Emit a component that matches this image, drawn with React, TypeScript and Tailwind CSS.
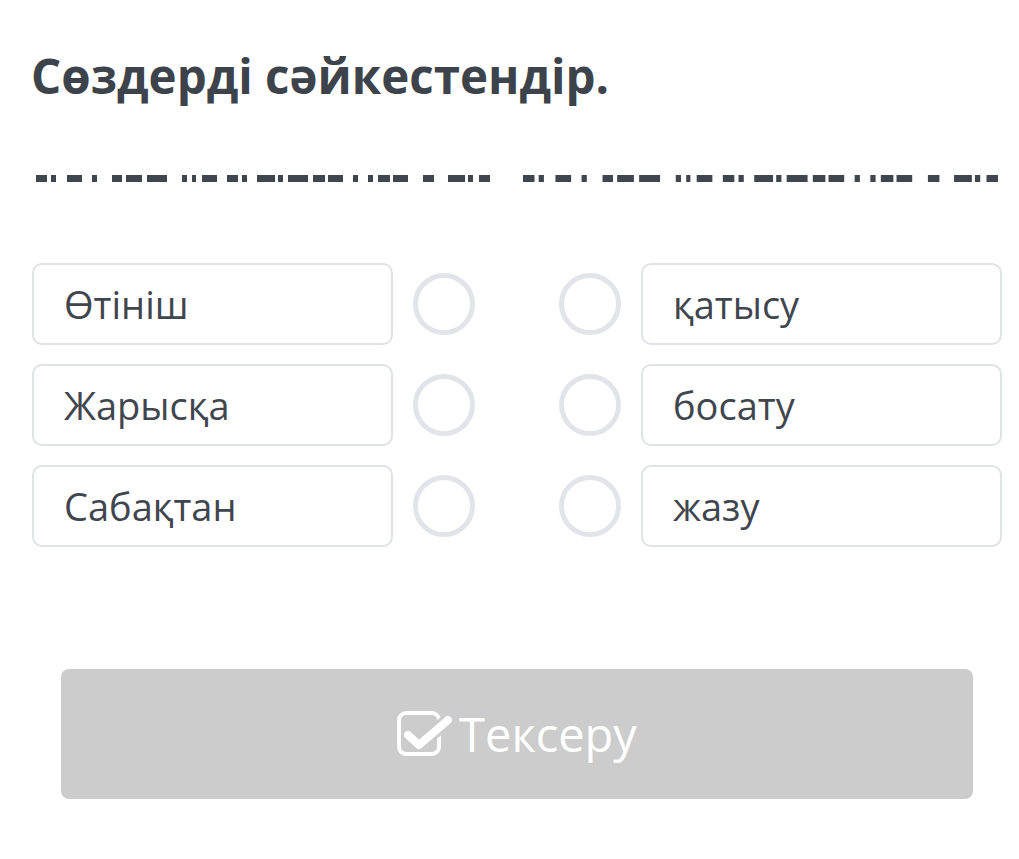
import { Fragment } from "react";

const segs: [number, number][] = [
  [0, 11], [15, 5], [31, 15], [56, 5], [76, 10], [90, 16], [111, 20], [146, 5], [156, 4], [166, 15],
  [191, 11], [206, 5], [221, 18], [242, 5], [252, 20], [277, 12], [292, 15], [317, 5], [332, 5],
  [342, 12], [357, 15], [387, 11], [412, 17], [432, 5], [443, 11],
];

const Dashes = ({ width }: { width: number }) => (
  <svg width={width} height="7" viewBox="0 0 454 7" preserveAspectRatio="none" className="block">
    {segs.map(([x, w], i) => (
      <rect key={i} x={x} y="0" width={w} height="7" fill="#40464e" />
    ))}
  </svg>
);

const Circle = () => (
  <div className="w-[62px] h-[62px] rounded-full border-[5px] border-[#e1e5e9] shrink-0" />
);

const Box = ({ text }: { text: string }) => (
  <div className="w-[361px] h-[82px] rounded-[10px] border-2 border-[#dfe3e6] flex items-center pl-[30px] text-[38px] text-[#40464e] shrink-0">
    {text}
  </div>
);

const rows = [
  ["Өтініш", "қатысу"],
  ["Жарысқа", "босату"],
  ["Сабақтан", "жазу"],
];

export default function App() {
  return (
    <div className="min-h-screen bg-white pl-[32px] pr-[17px] pt-[43px]" style={{ fontFamily: '"Open Sans", "Noto Sans", sans-serif' }}>
      <h1 className="text-[47.5px] font-bold text-[#3d434b] leading-[66px] -ml-[1px]">Сөздерді сәйкестендір.</h1>

      <div className="flex items-center mt-[66px] pl-[4px]">
        <Dashes width={454} />
        <div className="w-[33px]" />
        <Dashes width={475} />
      </div>

      <div className="flex flex-col gap-[19px] mt-[81px]">
        {rows.map(([l, r]) => (
          <Fragment key={l}>
            <div className="flex items-center">
              <Box text={l} />
              <div className="ml-[20px]"><Circle /></div>
              <div className="ml-[84px]"><Circle /></div>
              <div className="ml-[20px]"><Box text={r} /></div>
            </div>
          </Fragment>
        ))}
      </div>

      <button className="mt-[122px] ml-[29px] w-[912px] h-[130px] rounded-[8px] bg-[#cccccc] flex items-center justify-center text-white text-[47px]">
        <svg width="56" height="46" viewBox="0 0 56 46" className="mr-[6px] mt-[-2px] shrink-0">
          <rect x="2" y="3" width="40" height="41" rx="7" fill="none" stroke="white" strokeWidth="4" />
          <path d="M11 25 L22 35 L51 10" fill="none" stroke="#cccccc" strokeWidth="14" strokeLinecap="round" strokeLinejoin="round" />
          <path d="M11 25 L22 35 L51 10" fill="none" stroke="white" strokeWidth="8" strokeLinecap="round" strokeLinejoin="round" />
        </svg>
        <span>Тексеру</span>
      </button>
    </div>
  );
}
